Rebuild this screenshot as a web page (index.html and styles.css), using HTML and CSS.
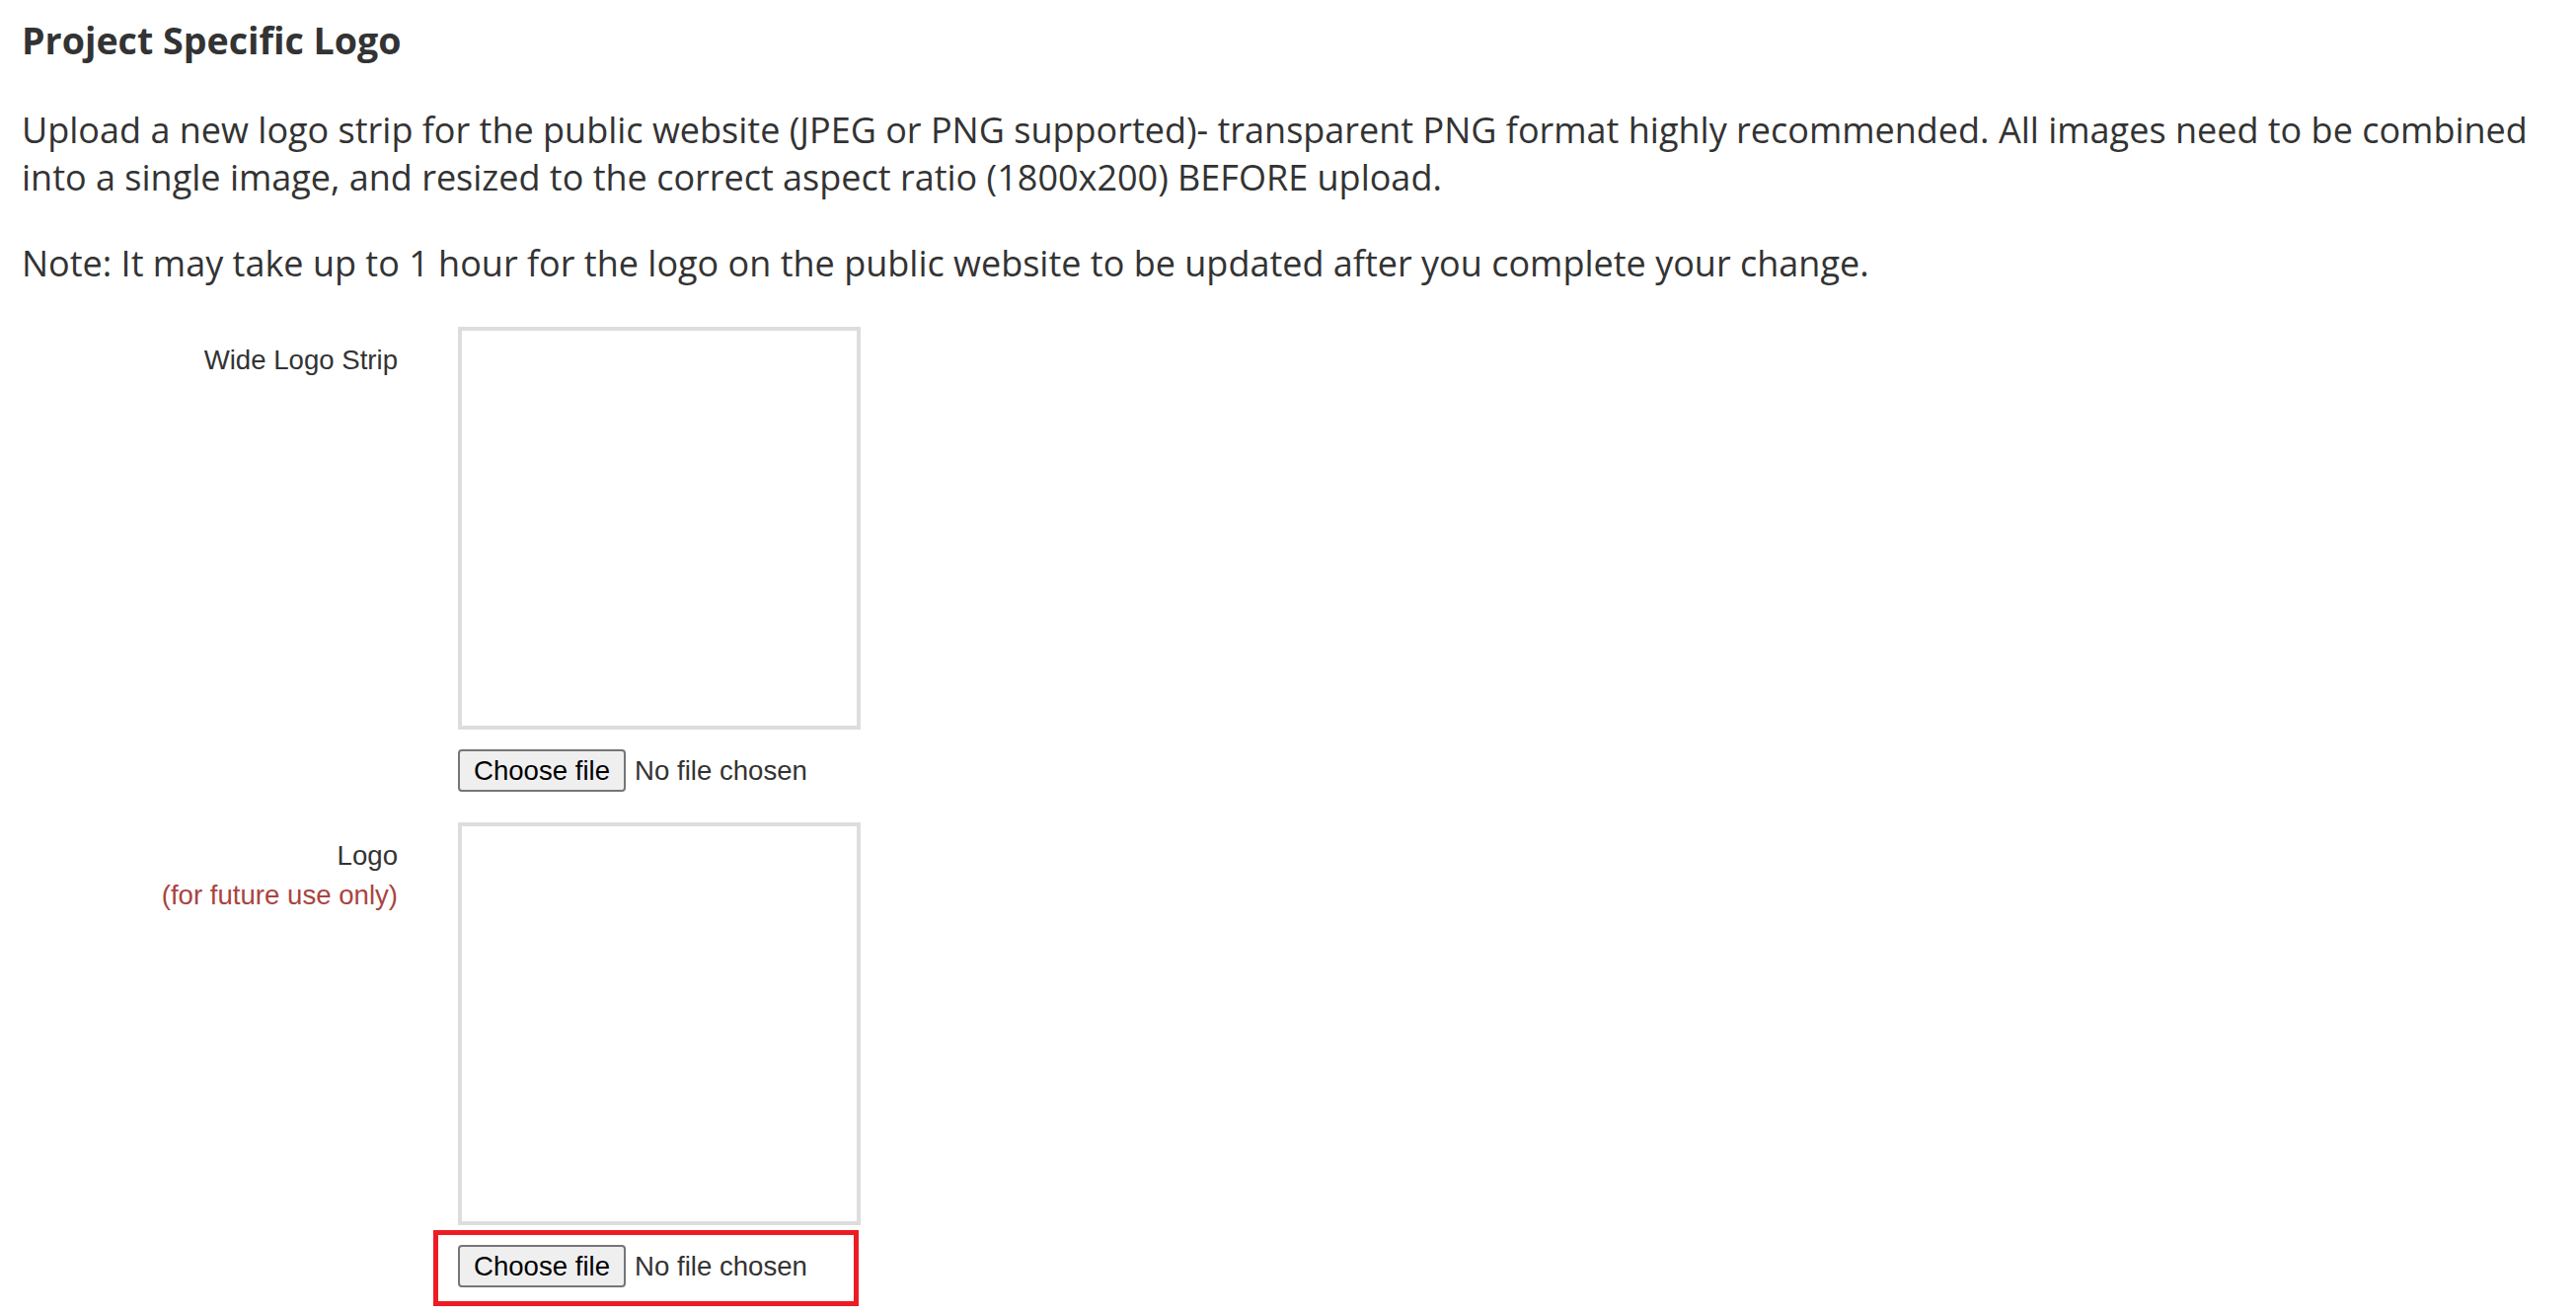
FILE: index.html
```html
<!DOCTYPE html>
<html lang="en">
<head>
<meta charset="utf-8">
<title>Project Specific Logo</title>
<link rel="stylesheet" href="styles.css">
</head>
<body>
<main class="page">
  <h2 class="title">Project Specific Logo</h2>
  <p class="intro">Upload a new logo strip for the public website (JPEG or PNG supported)- transparent PNG format highly recommended. All images need to be combined into a single image, and resized to the correct aspect ratio (1800x200) BEFORE upload.</p>
  <p class="intro">Note: It may take up to 1 hour for the logo on the public website to be updated after you complete your change.</p>

  <form class="form">
    <div class="row">
      <label class="label">Wide Logo Strip</label>
      <div class="field">
        <div class="preview"></div>
        <div class="file-row">
          <span class="file-btn">Choose file</span>
          <span class="file-name">No file chosen</span>
        </div>
      </div>
    </div>

    <div class="row">
      <label class="label">Logo<br><span class="note">(for future use only)</span></label>
      <div class="field">
        <div class="preview"></div>
        <div class="file-row">
          <span class="file-btn">Choose file</span>
          <span class="file-name">No file chosen</span>
          <span class="highlight"></span>
        </div>
      </div>
    </div>
  </form>
</main>
</body>
</html>
```

FILE: styles.css
```css
* { box-sizing: border-box; }

html, body {
  margin: 0;
  padding: 0;
  background: #ffffff;
}

body {
  color: #333333;
  font-family: "Open Sans", "Noto Sans", sans-serif;
  overflow: hidden;
}

.page {
  padding: 16px 22px 0 22px;
}

.title {
  font-family: "Open Sans", "Noto Sans", sans-serif;
  font-weight: 700;
  font-size: 37.6px;
  line-height: 49px;
  margin: 0 0 43px 0;
  color: #333333;
}

.intro {
  font-size: 36px;
  line-height: 48px;
  margin: 0 0 39px 0;
  color: #333333;
}

.form {
  padding-top: 1px;
  font-family: "Liberation Sans", Arial, sans-serif;
  font-size: 27.6px;
  line-height: 40px;
}

.row {
  display: grid;
  grid-template-columns: 381px 408px;
  column-gap: 61px;
  margin-bottom: 31px;
}

.label {
  text-align: right;
  padding-top: 14px;
  color: #333333;
}

.note {
  color: #a94442;
}

.preview {
  width: 408px;
  height: 408px;
  border: 4px solid #dddddd;
  background: #ffffff;
}

.file-row {
  position: relative;
  display: flex;
  align-items: center;
  margin-top: 20px;
  height: 43px;
}

.file-btn {
  display: inline-flex;
  align-items: center;
  height: 43px;
  padding: 0 14px;
  border: 2px solid #767676;
  border-radius: 4px;
  background: #efefef;
  color: #000000;
}

.file-name {
  margin-left: 9px;
  color: #333333;
}

.highlight {
  position: absolute;
  left: -25px;
  top: -15px;
  width: 431px;
  height: 77px;
  border: 5px solid #ed1c24;
  pointer-events: none;
}
```
